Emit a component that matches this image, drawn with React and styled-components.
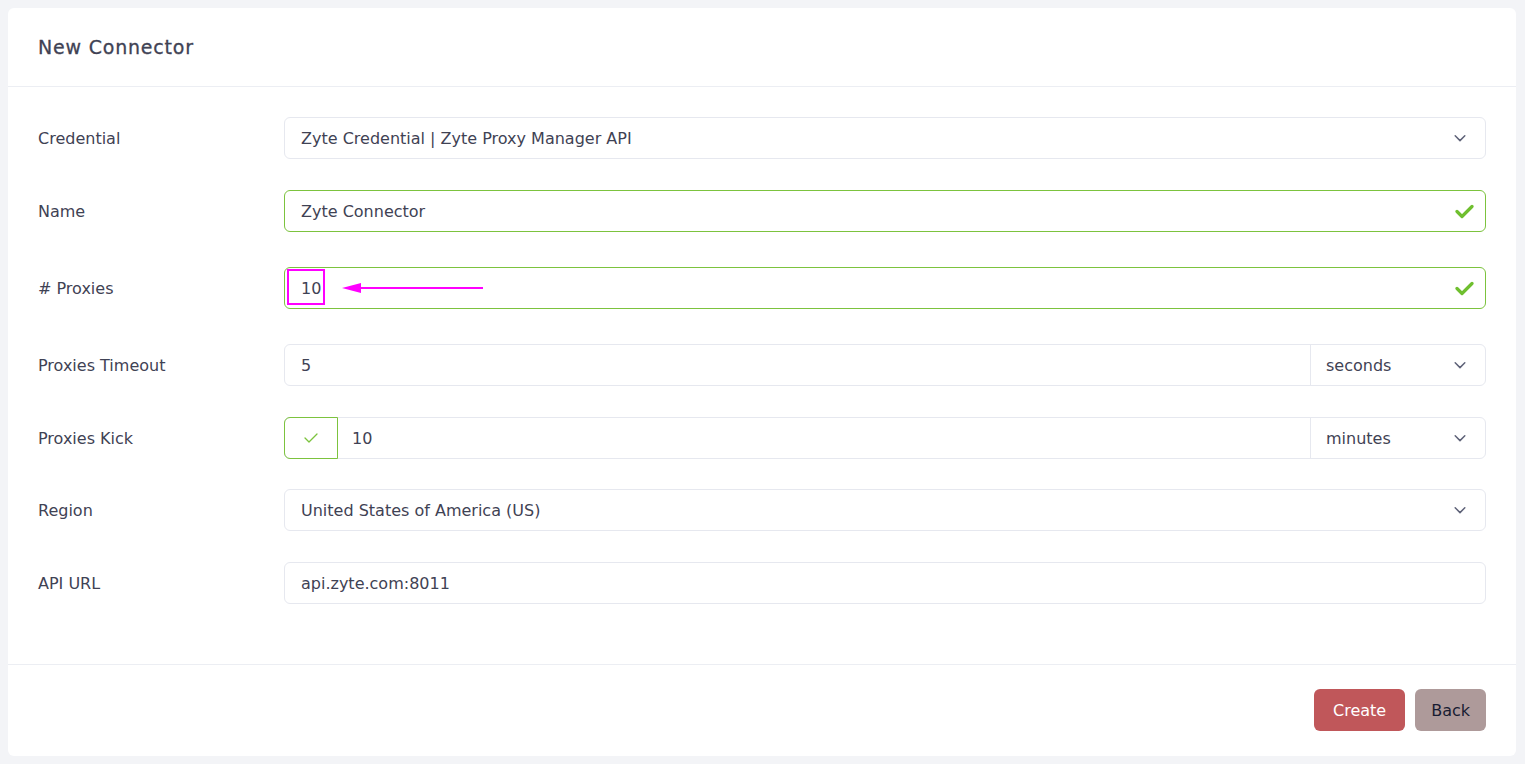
import styled, { createGlobalStyle } from 'styled-components';

const GlobalStyle = createGlobalStyle`
  body {
    margin: 0;
    padding: 8px 9px 8px 8px;
    background: #f3f4f7;
    font-family: 'DejaVu Sans', 'Noto Sans', sans-serif;
    color: #3f4254;
  }
`;

const Card = styled.div`
  background: #ffffff;
  border-radius: 6px;
  display: flex;
  flex-direction: column;
`;

const CardHeader = styled.div`
  height: 78px;
  display: flex;
  align-items: center;
  padding: 0 30px;
  border-bottom: 1px solid #eceef3;
`;

const Title = styled.h3`
  margin: 0;
  font-size: 19px;
  font-weight: 500;
  letter-spacing: 0.8px;
  color: #3f4254;
  -webkit-text-stroke: 0.3px #3f4254;
`;

const CardBody = styled.div`
  padding: 30px 30px 29px;
`;

const Row = styled.div`
  display: flex;
  align-items: flex-start;
  margin-bottom: ${(p) => p.$gap || '31px'};
`;

const Label = styled.label`
  width: 246px;
  flex: none;
  height: 42px;
  display: flex;
  align-items: center;
  font-size: 16px;
  color: #3f4254;
`;

const Field = styled.div`
  flex: 1;
  position: relative;
  height: 42px;
  display: flex;
  align-items: center;
  padding: 0 16px;
  border: 1px solid ${(p) => (p.$valid ? '#7cc33e' : '#e6e8ef')};
  border-radius: 6px;
  font-size: 16px;
  color: #3f4254;
  box-sizing: border-box;
`;

const Group = styled.div`
  flex: 1;
  display: flex;
  height: 42px;
  border: 1px solid #e6e8ef;
  border-radius: 6px;
  box-sizing: border-box;
`;

const GroupInput = styled.div`
  flex: 1;
  display: flex;
  align-items: center;
  padding: 0 ${(p) => p.$pad || '16px'};
  font-size: 16px;
  color: #3f4254;
`;

const Unit = styled.div`
  width: 175px;
  flex: none;
  display: flex;
  align-items: center;
  justify-content: space-between;
  padding: 0 18px 0 15px;
  border-left: 1px solid #e6e8ef;
  box-sizing: border-box;
  font-size: 16px;
  color: #3f4254;
`;

const CheckBox = styled.div`
  width: 52px;
  flex: none;
  margin: -1px 0 -1px -1px;
  border: 1px solid #7cc33e;
  border-radius: 6px 0 0 6px;
  display: flex;
  align-items: center;
  justify-content: center;
`;

const Trailing = styled.span`
  margin-left: auto;
  margin-right: ${(p) => p.$right || '2px'};
  display: flex;
  align-items: center;
`;

const Highlight = styled.span`
  position: absolute;
  left: 2px;
  top: 1px;
  width: 38px;
  height: 36px;
  border: 2px solid #ff00ff;
  box-sizing: border-box;
`;

const Arrow = styled.svg`
  position: absolute;
  left: 57px;
  top: 14px;
`;

const CardFooter = styled.div`
  border-top: 1px solid #eceef3;
  padding: 24px 30px 25px;
  display: flex;
  justify-content: flex-end;
  gap: 10px;
`;

const Button = styled.button`
  height: 42px;
  padding: 0 ${(p) => (p.$primary ? '19px' : '16px')};
  border: none;
  border-radius: 6px;
  font-family: inherit;
  font-size: 16px;
  background: ${(p) => (p.$primary ? '#c0575a' : '#ae9a9a')};
  color: ${(p) => (p.$primary ? '#ffffff' : '#181c32')};
`;

const Chevron = () => (
  <svg width="14" height="14" viewBox="0 0 16 16" fill="none">
    <path d="M2.5 5.5L8 11l5.5-5.5" stroke="#5e6278" strokeWidth="1.7" strokeLinecap="round" strokeLinejoin="round" />
  </svg>
);

const ValidCheck = () => (
  <svg width="19" height="15" viewBox="0 0 19 15" fill="none">
    <path d="M2 7.5l5 5L17 2.5" stroke="#6fbf2f" strokeWidth="3.2" strokeLinecap="round" strokeLinejoin="round" />
  </svg>
);

const ThinCheck = () => (
  <svg width="16" height="12" viewBox="0 0 16 12" fill="none">
    <path d="M2 6l4 4 8-8" stroke="#7cc33e" strokeWidth="1.3" strokeLinecap="round" strokeLinejoin="round" />
  </svg>
);

export default function App() {
  return (
    <>
      <GlobalStyle />
      <Card>
        <CardHeader>
          <Title>New Connector</Title>
        </CardHeader>
        <CardBody>
          <Row>
            <Label>Credential</Label>
            <Field>
              Zyte Credential | Zyte Proxy Manager API
              <Trailing>
                <Chevron />
              </Trailing>
            </Field>
          </Row>
          <Row $gap="35px">
            <Label>Name</Label>
            <Field $valid>
              Zyte Connector
              <Trailing $right="-5px">
                <ValidCheck />
              </Trailing>
            </Field>
          </Row>
          <Row $gap="35px">
            <Label># Proxies</Label>
            <Field $valid>
              10
              <Highlight />
              <Arrow width="142" height="12" viewBox="0 0 142 12">
                <polygon points="0,6 19,1 19,11" fill="#ff00ff" />
                <line x1="17" y1="6" x2="141" y2="6" stroke="#ff00ff" strokeWidth="2" />
              </Arrow>
              <Trailing $right="-5px">
                <ValidCheck />
              </Trailing>
            </Field>
          </Row>
          <Row>
            <Label>Proxies Timeout</Label>
            <Group>
              <GroupInput>5</GroupInput>
              <Unit>
                seconds
                <Chevron />
              </Unit>
            </Group>
          </Row>
          <Row $gap="30px">
            <Label>Proxies Kick</Label>
            <Group>
              <CheckBox>
                <ThinCheck />
              </CheckBox>
              <GroupInput $pad="14px">10</GroupInput>
              <Unit>
                minutes
                <Chevron />
              </Unit>
            </Group>
          </Row>
          <Row>
            <Label>Region</Label>
            <Field>
              United States of America (US)
              <Trailing>
                <Chevron />
              </Trailing>
            </Field>
          </Row>
          <Row>
            <Label>API URL</Label>
            <Field>api.zyte.com:8011</Field>
          </Row>
        </CardBody>
        <CardFooter>
          <Button $primary>Create</Button>
          <Button>Back</Button>
        </CardFooter>
      </Card>
    </>
  );
}
